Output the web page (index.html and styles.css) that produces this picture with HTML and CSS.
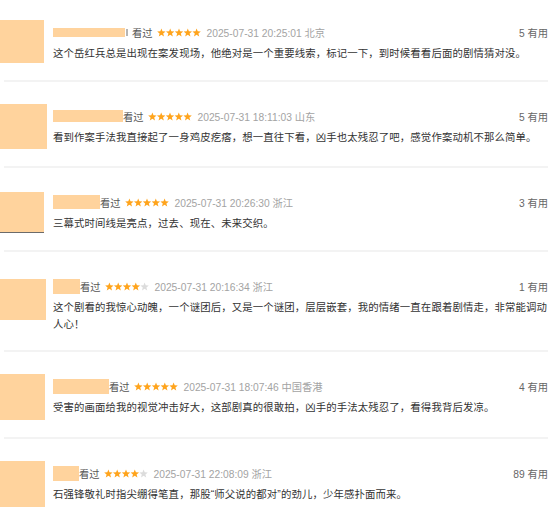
FILE: index.html
```html
<!DOCTYPE html>
<html lang="zh-CN">
<head>
    <meta charset="UTF-8">
    <title>短评</title>
    <link rel="stylesheet" href="styles.css">
</head>
<body>

    <svg class="defs" width="0" height="0">
        <symbol id="star" viewBox="0 0 10 10">
            <polygon points="5,0.4 6.25,3.7 9.8,3.85 7.05,6.1 8,9.6 5,7.6 2,9.6 2.95,6.1 0.2,3.85 3.75,3.7"/>
        </symbol>
    </svg>

    <div class="comments">

        <div class="item first">
            <div class="avatar"></div>
            <div class="content">
                <div class="meta">
                    <span class="name" style="width: 72px; height: 9px;"></span>
                    <span class="tick"></span>
                    <span class="watched">看过</span>
                    <svg class="stars" viewBox="0 0 50 10">
                        <use href="#star" x="0" width="10" height="10" class="on"/>
                        <use href="#star" x="10" width="10" height="10" class="on"/>
                        <use href="#star" x="20" width="10" height="10" class="on"/>
                        <use href="#star" x="30" width="10" height="10" class="on"/>
                        <use href="#star" x="40" width="10" height="10" class="on"/>
                    </svg>
                    <span class="time">2025-07-31 20:25:01 北京</span>
                    <span class="useful">5 有用</span>
                </div>
                <p class="text">这个岳红兵总是出现在案发现场，他绝对是一个重要线索，标记一下，到时候看看后面的剧情猜对没。</p>
            </div>
        </div>
        <hr class="sep">

        <div class="item">
            <div class="avatar big"></div>
            <div class="content">
                <div class="meta">
                    <span class="name" style="width: 70px; height: 12px;"></span>
                    <span class="watched">看过</span>
                    <svg class="stars" viewBox="0 0 50 10">
                        <use href="#star" x="0" width="10" height="10" class="on"/>
                        <use href="#star" x="10" width="10" height="10" class="on"/>
                        <use href="#star" x="20" width="10" height="10" class="on"/>
                        <use href="#star" x="30" width="10" height="10" class="on"/>
                        <use href="#star" x="40" width="10" height="10" class="on"/>
                    </svg>
                    <span class="time">2025-07-31 18:11:03 山东</span>
                    <span class="useful">5 有用</span>
                </div>
                <p class="text">看到作案手法我直接起了一身鸡皮疙瘩，想一直往下看，凶手也太残忍了吧，感觉作案动机不那么简单。</p>
            </div>
        </div>
        <hr class="sep">

        <div class="item">
            <div class="avatar edge"></div>
            <div class="content">
                <div class="meta">
                    <span class="name" style="width: 47px; height: 14px;"></span>
                    <span class="watched">看过</span>
                    <svg class="stars" viewBox="0 0 50 10">
                        <use href="#star" x="0" width="10" height="10" class="on"/>
                        <use href="#star" x="10" width="10" height="10" class="on"/>
                        <use href="#star" x="20" width="10" height="10" class="on"/>
                        <use href="#star" x="30" width="10" height="10" class="on"/>
                        <use href="#star" x="40" width="10" height="10" class="on"/>
                    </svg>
                    <span class="time">2025-07-31 20:26:30 浙江</span>
                    <span class="useful">3 有用</span>
                </div>
                <p class="text">三幕式时间线是亮点，过去、现在、未来交织。</p>
            </div>
        </div>
        <hr class="sep">

        <div class="item">
            <div class="avatar low"></div>
            <div class="content">
                <div class="meta">
                    <span class="name" style="width: 27px; height: 15px;"></span>
                    <span class="watched">看过</span>
                    <svg class="stars" viewBox="0 0 50 10">
                        <use href="#star" x="0" width="10" height="10" class="on"/>
                        <use href="#star" x="10" width="10" height="10" class="on"/>
                        <use href="#star" x="20" width="10" height="10" class="on"/>
                        <use href="#star" x="30" width="10" height="10" class="on"/>
                        <use href="#star" x="40" width="10" height="10" class="off"/>
                    </svg>
                    <span class="time">2025-07-31 20:16:34 浙江</span>
                    <span class="useful">1 有用</span>
                </div>
                <p class="text">这个剧看的我惊心动魄，一个谜团后，又是一个谜团，层层嵌套，我的情绪一直在跟着剧情走，非常能调动人心！</p>
            </div>
        </div>
        <hr class="sep">

        <div class="item">
            <div class="avatar tall"></div>
            <div class="content">
                <div class="meta">
                    <span class="name" style="width: 56px; height: 15px;"></span>
                    <span class="watched">看过</span>
                    <svg class="stars" viewBox="0 0 50 10">
                        <use href="#star" x="0" width="10" height="10" class="on"/>
                        <use href="#star" x="10" width="10" height="10" class="on"/>
                        <use href="#star" x="20" width="10" height="10" class="on"/>
                        <use href="#star" x="30" width="10" height="10" class="on"/>
                        <use href="#star" x="40" width="10" height="10" class="on"/>
                    </svg>
                    <span class="time">2025-07-31 18:07:46 中国香港</span>
                    <span class="useful">4 有用</span>
                </div>
                <p class="text">受害的画面给我的视觉冲击好大，这部剧真的很敢拍，凶手的手法太残忍了，看得我背后发凉。</p>
            </div>
        </div>
        <hr class="sep">

        <div class="item">
            <div class="avatar tall"></div>
            <div class="content">
                <div class="meta">
                    <span class="name" style="width: 26px; height: 15px;"></span>
                    <span class="watched">看过</span>
                    <svg class="stars" viewBox="0 0 50 10">
                        <use href="#star" x="0" width="10" height="10" class="on"/>
                        <use href="#star" x="10" width="10" height="10" class="on"/>
                        <use href="#star" x="20" width="10" height="10" class="on"/>
                        <use href="#star" x="30" width="10" height="10" class="on"/>
                        <use href="#star" x="40" width="10" height="10" class="off"/>
                    </svg>
                    <span class="time">2025-07-31 22:08:09 浙江</span>
                    <span class="useful">89 有用</span>
                </div>
                <p class="text">石强锋敬礼时指尖绷得笔直，那股“师父说的都对”的劲儿，少年感扑面而来。</p>
            </div>
        </div>

    </div>

</body>
</html>
```

FILE: styles.css
```css
body {
    margin: 0;
    padding: 0;
    background-color: #fff;
    font-family: "Liberation Sans", "Noto Sans CJK SC", sans-serif;
    font-size: 10.25px;
    color: #333;
}

.defs {
    display: block;
    width: 0;
    height: 0;
}

.comments {
    width: 553px;
}

.item {
    display: flex;
    align-items: flex-start;
    padding: 22px 5px 17px 0;
}

.item.first {
    padding-top: 20px;
}

.avatar {
    flex: none;
    width: 44px;
    height: 43px;
    margin-right: 9px;
    background-color: #ffd39d;
}

.avatar.big {
    width: 47px;
    height: 45px;
    margin-right: 6px;
}

.avatar.edge {
    margin-top: 2px;
    height: 40px;
    border-bottom: 1px solid #6b6b6b;
}

.avatar.low {
    width: 46px;
    height: 41px;
    margin-top: 5px;
    margin-right: 7px;
}

.avatar.tall {
    width: 45px;
    height: 46px;
    margin-right: 8px;
}

.content {
    flex: 1;
    margin-top: 4px;
    min-width: 0;
}

.meta {
    display: flex;
    align-items: center;
    height: 16px;
    white-space: nowrap;
}

.name {
    display: inline-block;
    background-color: #ffd39d;
}

.tick {
    display: inline-block;
    width: 2px;
    height: 7px;
    margin: 0 4px 0 1px;
    background-color: #b5b5b5;
}

.watched {
    color: #555;
}

.stars {
    width: 44px;
    height: 9px;
    margin: 0 6px 0 4px;
}

.stars .on {
    fill: #ffa41c;
}

.stars .off {
    fill: #dcdcdc;
}

.time {
    color: #a3a3a3;
}

.useful {
    margin-left: auto;
    color: #666;
}

.text {
    margin: 5px 0 0;
    font-size: 10.4px;
    letter-spacing: 0.12px;
    line-height: 17px;
    color: #333;
}

.sep {
    height: 2px;
    margin: 0 5px 0 4px;
    border: none;
    background-color: #f3f3f3;
}
```
